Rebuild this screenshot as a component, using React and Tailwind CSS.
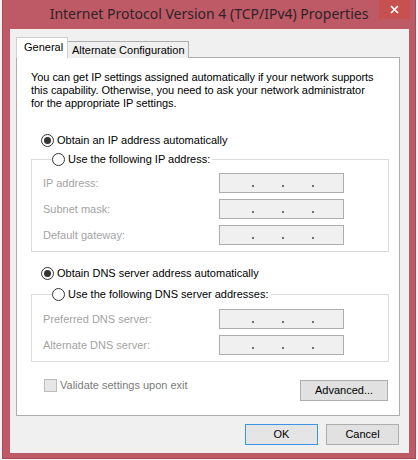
const UI = { fontFamily: '"Liberation Sans", Arial, sans-serif' };
const TITLE = { fontFamily: '"Noto Sans", "Open Sans", sans-serif' };

const Radio = ({ checked, label }) => (
  <div className="flex items-center h-[13px] text-[11px] leading-[13px] text-black whitespace-nowrap">
    <span className="w-[13px] h-[13px] rounded-full border border-[#333] bg-white flex items-center justify-center">
      {checked && <span className="w-[7px] h-[7px] rounded-full bg-[#333]" />}
    </span>
    <span className="ml-[3px] pr-[2px]">{label}</span>
  </div>
);

const IpBox = () => (
  <div className="w-[125px] h-[20px] border border-[#adadad] bg-[#f0f0f0] flex items-end pb-[5px] pl-[32px] gap-[28px]">
    <span className="w-[2px] h-[2px] bg-[#707070]" />
    <span className="w-[2px] h-[2px] bg-[#707070]" />
    <span className="w-[2px] h-[2px] bg-[#707070]" />
  </div>
);

const Field = ({ label }) => (
  <div className="flex items-center h-[20px]">
    <span className="w-[176px] text-[11px] leading-[13px] text-[#a3a3a3]">{label}</span>
    <IpBox />
  </div>
);

const Group = ({ legend, fields, top }) => (
  <fieldset className={`border border-[#dcdcdc] pl-[11px] pb-[6px] ${top}`}>
    <legend className="ml-[9px]">
      <Radio label={legend} />
    </legend>
    <div className="flex flex-col gap-[6px]">
      {fields.map(f => (
        <Field key={f} label={f} />
      ))}
    </div>
  </fieldset>
);

export default function App() {
  return (
    <div className="w-[418px] h-[460px] bg-[#f2f2f2] px-[2px]" style={UI}>
      <div className="h-[459px] bg-[#be5a66] border-x border-b border-[#a84a56] flex flex-col pl-[7px] pr-[6px]">
        {/* title bar */}
        <div className="relative h-[29px] -ml-[7px] -mr-[6px] flex items-center justify-center">
          <span className="text-[14px] text-[#2e2226] -mt-[2px]" style={TITLE}>
            Internet Protocol Version 4 (TCP/IPv4) Properties
          </span>
          <button className="absolute top-0 right-[5px] w-[31px] h-[19px] bg-[#c75050] flex items-center justify-center">
            <svg width="9" height="9" viewBox="0 0 9 9">
              <path d="M1 1L8 8M8 1L1 8" stroke="white" strokeWidth="1.7" />
            </svg>
          </button>
        </div>

        {/* client area */}
        <div className="h-[424px] bg-[#f0f0f0] pt-[8px] pl-[6px] pr-[9px]">
          <div className="flex items-end -mb-px relative z-10 text-[11px] text-black whitespace-nowrap">
            <div className="h-[21px] w-[52px] bg-white border border-b-0 border-[#d0d0d0] pl-[7px] pt-[3px] leading-[13px]">
              General
            </div>
            <div className="h-[17px] w-[121px] bg-[#f0f0f0] border border-l-0 border-b-0 border-[#adadad] pl-[4px] pt-[2px] leading-[13px]">
              Alternate Configuration
            </div>
          </div>

          <div className="w-[384px] h-[359px] bg-white border border-[#adadad] pl-[14px] pr-[10px] pt-[13px]">
            <p className="text-[11px] leading-[13px] text-black tracking-[-0.05px]">
              You can get IP settings assigned automatically if your network supports<br />
              this capability. Otherwise, you need to ask your network administrator<br />
              for the appropriate IP settings.
            </p>

            <div className="mt-[24px] ml-[10px]">
              <Radio checked label="Obtain an IP address automatically" />
            </div>
            <div className="mt-[6px]">
              <Group
                top="pt-[7px]"
                legend="Use the following IP address:"
                fields={['IP address:', 'Subnet mask:', 'Default gateway:']}
              />
            </div>

            <div className="mt-[15px] ml-[10px]">
              <Radio checked label="Obtain DNS server address automatically" />
            </div>
            <div className="mt-[8px]">
              <Group
                top="pt-[8px]"
                legend="Use the following DNS server addresses:"
                fields={['Preferred DNS server:', 'Alternate DNS server:']}
              />
            </div>

            <div className="mt-[17px] flex justify-between items-start">
              <label className="ml-[13px] flex items-center text-[11px] leading-[13px] text-[#7a7a7a]">
                <span className="w-[13px] h-[13px] border border-[#bcbcbc] bg-[#e6e6e6]" />
                <span className="ml-[3px]">Validate settings upon exit</span>
              </label>
              <button className="mt-[1px] mr-[1px] w-[88px] h-[21px] border border-[#adadad] bg-[#e1e1e1] text-[11px] text-black">
                Advanced...
              </button>
            </div>
          </div>

          <div className="mt-[8px] flex justify-end gap-[8px] pr-px text-[11px] text-black">
            <button className="w-[73px] h-[21px] border border-[#3c94e6] bg-[#e5e5e5]">OK</button>
            <button className="w-[73px] h-[21px] border border-[#adadad] bg-[#e1e1e1]">Cancel</button>
          </div>
        </div>
      </div>
    </div>
  );
}
